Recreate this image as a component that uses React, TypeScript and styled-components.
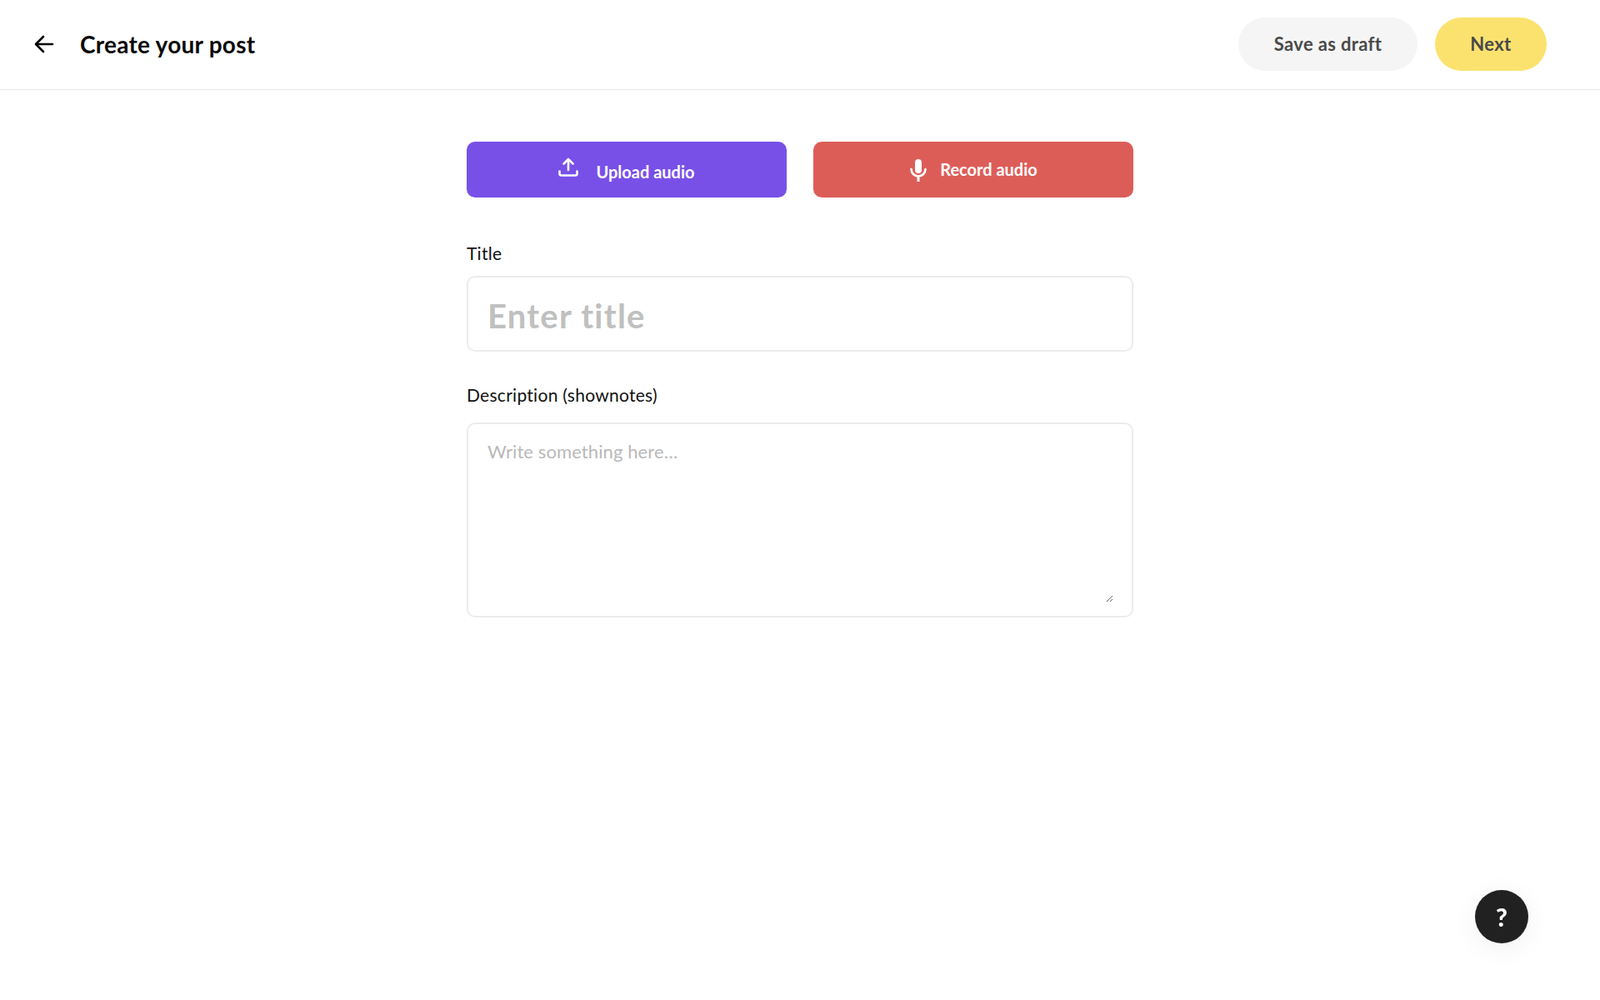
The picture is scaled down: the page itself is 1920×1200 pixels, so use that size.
import React from "react";
import styled, { createGlobalStyle } from "styled-components";

const GlobalStyle = createGlobalStyle`
  html, body {
    margin: 0;
    padding: 0;
    background: #ffffff;
    font-family: "Lato", "Noto Sans", sans-serif;
  }
  * {
    box-sizing: border-box;
  }
`;

const Page = styled.div`
  width: 100%;
  min-height: 1200px;
  background: #fff;
`;

const Header = styled.header`
  height: 108px;
  display: flex;
  align-items: center;
  justify-content: space-between;
  padding: 0 64px 2px 40px;
  border-bottom: 1px solid #e6e6e6;
`;

const HeaderLeft = styled.div`
  display: flex;
  align-items: center;
  gap: 30px;
`;

const BackButton = styled.button`
  width: 26px;
  height: 26px;
  padding: 0;
  border: 0;
  background: none;
  display: flex;
  align-items: center;
  justify-content: center;
  color: #000;
`;

const PageTitle = styled.h1`
  margin: 0;
  font-size: 28px;
  font-weight: 700;
  letter-spacing: 0.25px;
  color: #0a0a0a;
`;

const HeaderActions = styled.div`
  display: flex;
  gap: 21px;
`;

const Pill = styled.button<{ $bg: string; $width: number }>`
  width: ${(p) => p.$width}px;
  height: 64px;
  border: 0;
  border-radius: 32px;
  background: ${(p) => p.$bg};
  color: #4a4a4a;
  font-family: inherit;
  font-size: 22px;
  font-weight: 700;
  letter-spacing: 0.35px;
`;

const Form = styled.main`
  width: 800px;
  margin: 62px auto 0;
`;

const SourceRow = styled.div`
  display: grid;
  grid-template-columns: 384px 384px;
  gap: 32px;
  margin-bottom: 53px;
`;

const SourceButton = styled.button<{ $bg: string; $gap: number; $shift: number }>`
  height: 67px;
  border: 0;
  border-radius: 10px;
  background: ${(p) => p.$bg};
  color: #fff;
  font-family: inherit;
  font-size: 20px;
  font-weight: 700;
  display: flex;
  align-items: center;
  justify-content: center;
  gap: ${(p) => p.$gap}px;

  span {
    position: relative;
    top: ${(p) => p.$shift}px;
  }
`;

const Field = styled.label`
  display: block;
  margin-bottom: 38px;
`;

const FieldLabel = styled.div<{ $gap: number }>`
  font-size: 21px;
  line-height: 28px;
  letter-spacing: 0.28px;
  color: #111;
  margin-bottom: ${(p) => p.$gap}px;
`;

const TitleInput = styled.input`
  display: block;
  width: 100%;
  height: 91px;
  padding: 4px 23px 0;
  border: 2px solid #ececec;
  border-radius: 10px;
  background: #fff;
  font-family: inherit;
  font-size: 40px;
  font-weight: 700;
  letter-spacing: 1.25px;
  outline: none;

  &::placeholder {
    color: #c0c0c0;
    opacity: 1;
  }
`;

const DescriptionBox = styled.div`
  height: 234px;
  padding: 18px 22px 16px 23px;
  border: 2px solid #ececec;
  border-radius: 10px;
  background: #fff;
`;

const DescriptionInput = styled.textarea`
  display: block;
  width: 100%;
  height: 100%;
  padding: 0;
  border: 0;
  background: transparent;
  font-family: inherit;
  font-size: 22px;
  line-height: 30px;
  letter-spacing: 0.1px;
  outline: none;

  &::placeholder {
    color: #b9b9b9;
    opacity: 1;
  }
`;

const HelpButton = styled.button`
  position: fixed;
  left: 1770px;
  top: 1068px;
  width: 64px;
  height: 64px;
  border: 0;
  border-radius: 50%;
  background: #212121;
  color: #fff;
  font-family: inherit;
  font-size: 30px;
  font-weight: 900;
  box-shadow: 0 6px 32px rgba(0, 0, 0, 0.06);
`;

export default function App() {
  return (
    <Page>
      <GlobalStyle />
      <Header>
        <HeaderLeft>
          <BackButton aria-label="Back">
            <svg width="26" height="26" viewBox="0 0 26 26" fill="none" stroke="currentColor" strokeWidth="2.6" strokeLinecap="round" strokeLinejoin="round">
              <path d="M23 13H3.5" />
              <path d="M12 4L3 13l9 9" />
            </svg>
          </BackButton>
          <PageTitle>Create your post</PageTitle>
        </HeaderLeft>
        <HeaderActions>
          <Pill $bg="#f5f5f5" $width={215}>Save as draft</Pill>
          <Pill $bg="#fbe26f" $width={134}>Next</Pill>
        </HeaderActions>
      </Header>
      <Form>
        <SourceRow>
          <SourceButton $bg="#7850e8" $gap={21} $shift={2}>
            <svg width="24" height="24" viewBox="0 0 24 24" fill="none" stroke="currentColor" strokeWidth="2.6" strokeLinecap="round" strokeLinejoin="round" style={{ marginTop: -6 }}>
              <path d="M12 15V2.5" />
              <path d="M6.5 7.5L12 2l5.500 5.500" />
              <path d="M1.500 16.500v3a2 2 0 0 0 2 2h17a2 2 0 0 0 2-2v-3" />
            </svg>
            <span>Upload audio</span>
          </SourceButton>
          <SourceButton $bg="#dc5d58" $gap={15} $shift={-1}>
            <svg width="22" height="28" viewBox="0 0 22 28" fill="none" stroke="currentColor" strokeLinecap="round">
              <rect x="7" y="1" width="8" height="17" rx="4" fill="currentColor" strokeWidth="0" />
              <path d="M2.500 13a8.500 8.500 0 0 0 17 0" strokeWidth="2.600" />
              <path d="M11 22v5" strokeWidth="3" />
            </svg>
            <span>Record audio</span>
          </SourceButton>
        </SourceRow>
        <Field>
          <FieldLabel $gap={13}>Title</FieldLabel>
          <TitleInput placeholder="Enter title" />
        </Field>
        <Field>
          <FieldLabel $gap={19}>Description (shownotes)</FieldLabel>
          <DescriptionBox>
            <DescriptionInput placeholder="Write something here…" />
          </DescriptionBox>
        </Field>
      </Form>
      <HelpButton aria-label="Help">?</HelpButton>
    </Page>
  );
}
